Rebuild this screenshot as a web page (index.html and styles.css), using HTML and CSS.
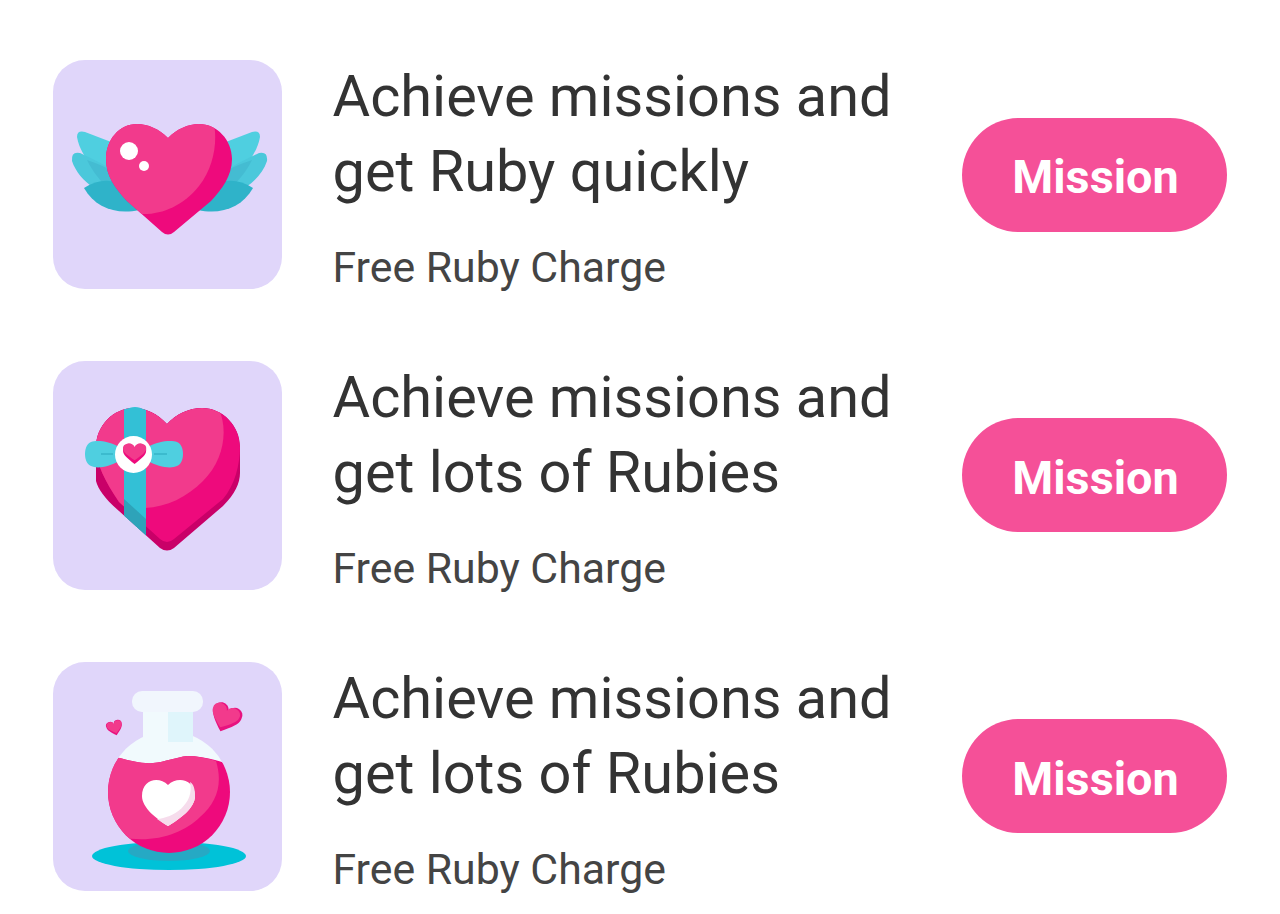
FILE: index.html
```html
<!DOCTYPE html>
<html lang="en">
<head>
<meta charset="utf-8">
<title>Free Ruby Charge</title>
<link rel="stylesheet" href="styles.css">
</head>
<body>
<svg class="defs" width="0" height="0" aria-hidden="true">
  <defs>
    <clipPath id="heart1"><path d="M115 78C106 69 95 64 84 64C66 64 53 80 53 99C53 116 62 128 74 141L109 172Q115 177 121 172L158 141C169 129 179 116 179 99C179 80 164 64 146 64C135 64 124 69 115 78Z"/></clipPath>
    <clipPath id="gift"><path d="M114 63C105 53 93 47 81 47C60 47 43 65 43 86V120C45 128 52 138 66 150L107 187Q114 192 121 187L170 145C182 133 187 122 187 112V86C187 65 170 47 149 47C136 47 123 53 114 63Z"/></clipPath>
    <clipPath id="face"><path d="M114 63C105 53 93 47 81 47C60 47 43 65 43 86C43 103 52 120 66 141L107 178Q114 184 121 178L170 138C182 124 187 103 187 86C187 65 170 47 149 47C136 47 123 53 114 63Z"/></clipPath>
    <clipPath id="ball"><circle cx="116" cy="130" r="61"/></clipPath>
    <path id="h" d="M12 21C5 15 1 11 1 7A5.5 5.5 0 0 1 12 5A5.5 5.5 0 0 1 23 7C23 11 19 15 12 21Z"/>
  </defs>
</svg>
<main class="list">
  <section class="row">
    <div class="tile">
      <svg class="art" viewBox="0 0 229 229">
        <path fill="#4fcfe0" d="M24 77Q24 70 32 72L66 85L74 132C50 120 28 100 24 77Z"/>
        <path fill="#4fcfe0" d="M207 77Q207 70 199 72L165 85L157 132C181 120 203 100 207 77Z"/>
        <path fill="#4bc8db" d="M19 101Q18 91 27 93C42 100 60 108 70 120L78 140C50 138 26 122 19 101Z"/>
        <path fill="#4bc8db" d="M214 101Q215 91 206 93C191 100 173 108 163 120L155 140C183 138 207 122 214 101Z"/>
        <path fill="#3fb4cb" d="M34 100C44 104 58 108 68 118L80 140C64 138 46 124 34 100Z" opacity=".6"/>
        <path fill="#3fb4cb" d="M199 100C189 104 174 108 164 118L152 140C168 138 187 124 199 100Z" opacity=".6"/>
        <path fill="#2fb3c9" d="M31 128Q50 116 68 124L86 150C64 155 42 148 31 128Z"/>
        <path fill="#2fb3c9" d="M200 128Q181 116 163 124L145 150C167 155 189 148 200 128Z"/>
        <g clip-path="url(#heart1)">
          <rect x="50" y="60" width="132" height="118" fill="#ee0a7c"/>
          <path fill="#f23a8c" d="M50 60H160C165 78 162 106 146 126C130 146 108 155 88 154L50 150Z"/>
        </g>
        <circle cx="76" cy="91" r="9" fill="#fff"/>
        <circle cx="91" cy="106" r="5" fill="#fff"/>
      </svg>
    </div>
    <div class="copy">
      <h2 class="title">Achieve missions and<br>get Ruby quickly</h2>
      <p class="sub">Free Ruby Charge</p>
    </div>
    <button class="mission">Mission</button>
  </section>

  <section class="row">
    <div class="tile">
      <svg class="art" viewBox="0 0 229 229">
        <g clip-path="url(#gift)">
          <rect x="40" y="44" width="150" height="150" fill="#c90068"/>
          <g clip-path="url(#face)">
            <rect x="40" y="44" width="150" height="150" fill="#ee0a7c"/>
            <path fill="#f23a8c" d="M40 44H164C176 66 172 98 150 120C134 136 114 146 92 147L40 147Z"/>
          </g>
          <rect x="71" y="44" width="22" height="150" fill="#33c0d6"/>
          <path fill="#2ea3b9" d="M71 138L93 158V194H71Z"/>
        </g>
        <path fill="#33c0d6" d="M71 56Q71 46 82 46Q93 46 93 56V70H71Z"/>
        <path fill="#4fcfe0" d="M66 86C56 80 44 79 38 81C30 84 30 102 38 105C44 108 56 106 66 100Z"/>
        <path fill="#4fcfe0" d="M95 86C105 80 118 79 124 81C132 84 132 102 124 105C118 108 105 106 95 100Z"/>
        <path stroke="#37b5c8" stroke-width="1.5" fill="none" d="M48 93H60M101 93H114"/>
        <circle cx="80.5" cy="93.5" r="18.5" fill="#fff"/>
        <use href="#h" fill="#ee0a7c" transform="translate(69 83) scale(1.05 .95)"/>
        <use href="#h" fill="#f23a8c" transform="translate(69 82) scale(1.05 .82)"/>
      </svg>
    </div>
    <div class="copy">
      <h2 class="title">Achieve missions and<br>get lots of Rubies</h2>
      <p class="sub">Free Ruby Charge</p>
    </div>
    <button class="mission">Mission</button>
  </section>

  <section class="row">
    <div class="tile">
      <svg class="art" viewBox="0 0 229 229">
        <ellipse cx="116" cy="194" rx="77" ry="14" fill="#00c2d8"/>
        <ellipse cx="116" cy="189" rx="41" ry="10" fill="#26a9c4"/>
        <g clip-path="url(#ball)">
          <rect x="50" y="60" width="132" height="60" fill="#f1fafd"/>
        </g>
        <rect x="90" y="46" width="50" height="40" fill="#f1fafd"/>
        <path fill="#dff5fb" d="M115 46H140V80H115Z"/>
        <rect x="79" y="29" width="71" height="21" rx="10" fill="#f1f6fd"/>
        <g clip-path="url(#ball)">
          <path fill="#ee0a7c" d="M50 100C56 95 62 95 67 96C78 99 90 102 100 101C112 100 124 95 134 94C144 94 154 96 162 98C170 100 180 104 182 106V200H50Z"/>
          <path fill="#f23a8c" d="M50 100C56 95 62 95 67 96C78 99 90 102 100 101C112 100 124 95 134 94C144 94 154 96 163 99C170 122 164 140 147 155C130 172 100 182 67 175L50 170Z"/>
        </g>
        <path fill="#fff" d="M115 123C106 114 89 117 89 134C89 146 104 157 115 164C127 157 142 146 142 134C142 117 124 114 115 123Z"/>
        <path fill="#f6dcec" d="M137 120C141 122 142 128 142 134C142 146 127 157 115 164C110 161 107 159 104 157C120 156 142 142 137 120Z"/>
        <use href="#h" fill="#e8127f" transform="translate(172 58) rotate(22) scale(1.35) translate(-12 -12)"/>
        <use href="#h" fill="#f23a8c" transform="translate(171 56) rotate(22) scale(1.28 1.12) translate(-12 -12)"/>
        <use href="#h" fill="#e8127f" transform="translate(62 67) rotate(-15) scale(.72) translate(-12 -12)"/>
        <use href="#h" fill="#f23a8c" transform="translate(62 66) rotate(-15) scale(.68 .6) translate(-12 -12)"/>
      </svg>
    </div>
    <div class="copy">
      <h2 class="title">Achieve missions and<br>get lots of Rubies</h2>
      <p class="sub">Free Ruby Charge</p>
    </div>
    <button class="mission">Mission</button>
  </section>
</main>
</body>
</html>
```

FILE: styles.css
```css
html, body {
  margin: 0;
  padding: 0;
  background: #fff;
}
body {
  width: 1280px;
  height: 914px;
  overflow: hidden;
  font-family: Roboto, "Liberation Sans", sans-serif;
}
.defs {
  position: absolute;
}
.list {
  display: flex;
  flex-direction: column;
  gap: 71.75px;
  padding: 60px 53px 0;
}
.row {
  display: flex;
  align-items: center;
  height: 229px;
}
.tile {
  flex: none;
  width: 229px;
  height: 229px;
  border-radius: 32px;
  background: #e0d6fa;
}
.art {
  display: block;
  width: 229px;
  height: 229px;
}
.copy {
  flex: 1;
  margin: -1px 0 0 50.5px;
  align-self: flex-start;
}
.title {
  margin: 0;
  font-size: 57.7px;
  font-weight: 400;
  line-height: 75px;
  color: #333;
}
.sub {
  margin: 35px 0 0;
  font-size: 42.8px;
  line-height: 46px;
  color: #444;
}
.mission {
  flex: none;
  width: 265px;
  height: 114px;
  padding: 5px 0 0 2px;
  border: 0;
  border-radius: 57px;
  background: #f55098;
  color: #fff;
  font-family: inherit;
  font-size: 46.8px;
  font-weight: 700;
}
```
